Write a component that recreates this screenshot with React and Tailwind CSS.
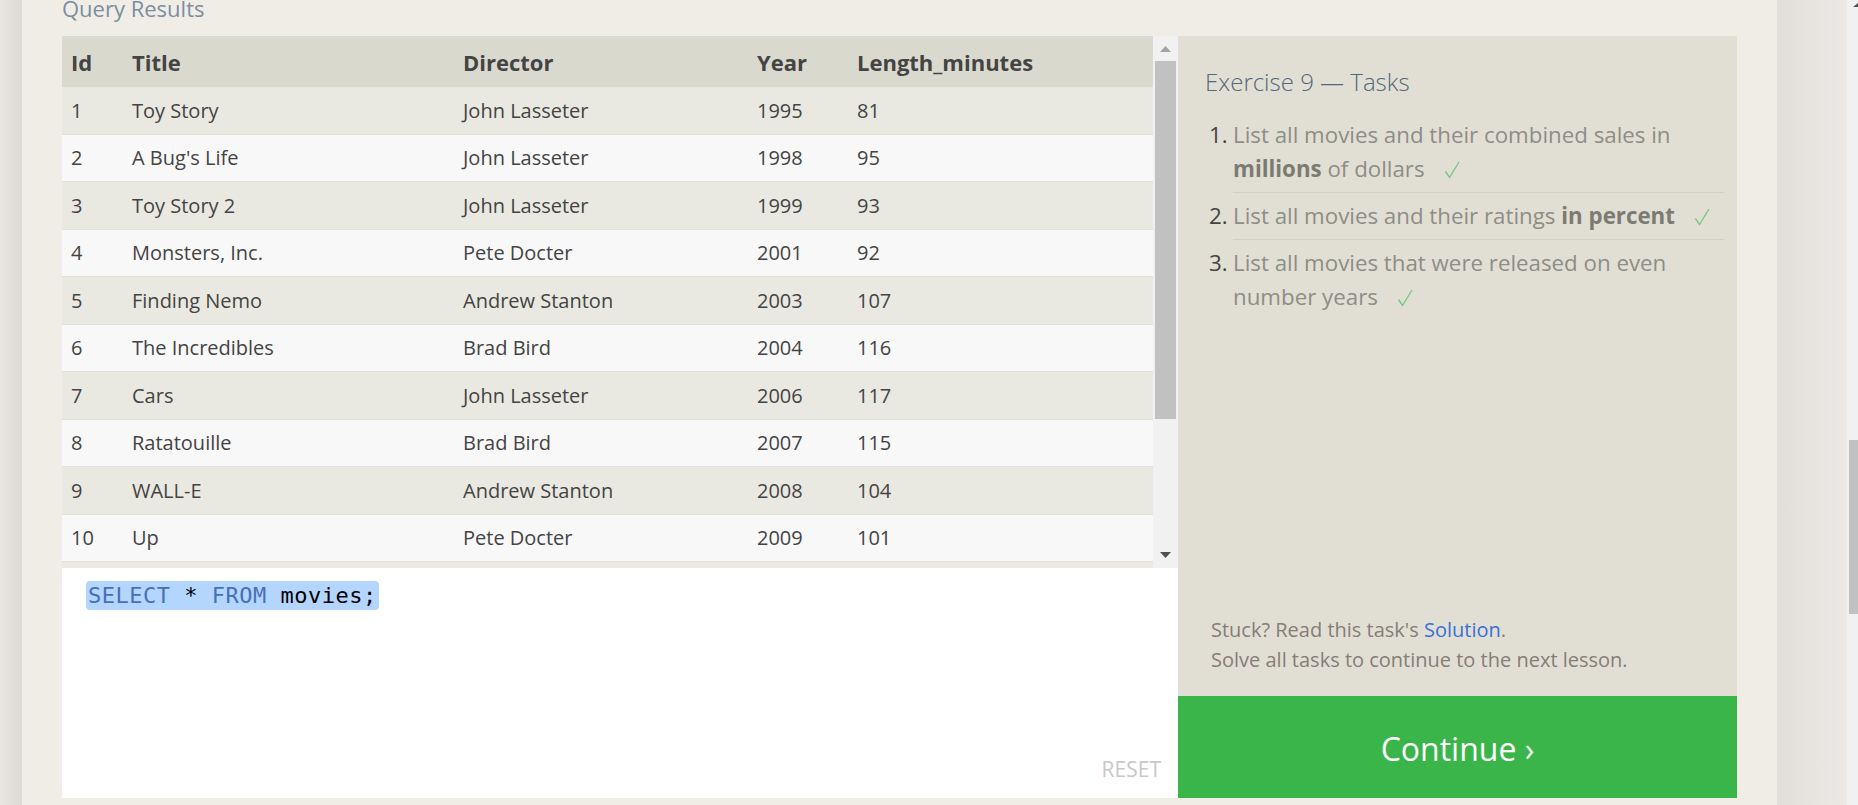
const rows = [
  ["1", "Toy Story", "John Lasseter", "1995", "81"],
  ["2", "A Bug's Life", "John Lasseter", "1998", "95"],
  ["3", "Toy Story 2", "John Lasseter", "1999", "93"],
  ["4", "Monsters, Inc.", "Pete Docter", "2001", "92"],
  ["5", "Finding Nemo", "Andrew Stanton", "2003", "107"],
  ["6", "The Incredibles", "Brad Bird", "2004", "116"],
  ["7", "Cars", "John Lasseter", "2006", "117"],
  ["8", "Ratatouille", "Brad Bird", "2007", "115"],
  ["9", "WALL-E", "Andrew Stanton", "2008", "104"],
  ["10", "Up", "Pete Docter", "2009", "101"],
];

function Check() {
  return (
    <svg width="16" height="18" viewBox="0 0 16 18" className="inline-block ml-[19px] align-[-2px]">
      <path d="M1.5 10.5 L5.5 16.5 L15 1" fill="none" stroke="#7cc688" strokeWidth="1.4" />
    </svg>
  );
}

export default function App() {
  return (
    <div className="flex h-[805px] w-[1858px] overflow-hidden bg-[#f0ede6] font-['Open_Sans',sans-serif]">
      <div className="w-[22px] shrink-0 bg-linear-to-r from-[#e9e5e2] to-[#ddd9d4]" />
      <div className="w-[1755px] shrink-0 flex flex-col pl-[40px]">
        <div className="h-[36px]">
          <p className="text-[22px] leading-[16px] text-[#7d8da0]">Query Results</p>
        </div>
        <div className="flex h-[762px] w-[1675px]">
          <div className="w-[1116px] flex flex-col">
            <div className="flex h-[532px] shrink-0">
              <div className="w-[1091px] bg-[#ebe9e2] flex flex-col">
                <div className="grid grid-cols-[61px_331px_294px_100px_1fr] h-[51px] shrink-0 items-center bg-[#dad9ce] text-[22px] leading-[30px] font-bold text-[#444]">
                  <div className="pl-[9px]">Id</div>
                  <div className="pl-[9px]">Title</div>
                  <div className="pl-[9px]">Director</div>
                  <div className="pl-[9px]">Year</div>
                  <div className="pl-[9px]">Length_minutes</div>
                </div>
                {rows.map((r, i) => (
                  <div
                    key={r[0]}
                    className={
                      "grid grid-cols-[61px_331px_294px_100px_1fr] h-[47.5px] shrink-0 items-center border-b border-[#e0dfda] pt-[1px] text-[20px] leading-[28px] text-[#444] " +
                      (i % 2 === 0 ? "bg-[#eae9e1]" : "bg-[#f8f8f8]")
                    }
                  >
                    {r.map((c, j) => (
                      <div key={j} className="pl-[9px]">{c}</div>
                    ))}
                  </div>
                ))}
              </div>
              <div className="w-[25px] bg-[#f1f1f1] flex flex-col items-center">
                <div className="h-[25px] flex items-center justify-center">
                  <svg width="11" height="6" viewBox="0 0 11 6"><path d="M5.5 0 L11 6 L0 6 Z" fill="#a3a3a3" /></svg>
                </div>
                <div className="w-[21px] h-[358px] bg-[#c1c1c1]" />
                <div className="flex-1" />
                <div className="h-[26px] flex items-center justify-center">
                  <svg width="11" height="6" viewBox="0 0 11 6"><path d="M0 0 L11 0 L5.5 6 Z" fill="#505050" /></svg>
                </div>
              </div>
            </div>
            <div className="flex-1 bg-white flex flex-col justify-between items-start pl-[24px] pr-[17px] pt-[13px] pb-[18px]">
              <div className="bg-[#b4d5fe] rounded-[4px] px-[2px] font-['DejaVu_Sans_Mono',monospace] text-[22px] leading-[29px] tracking-[0.5px] whitespace-pre">
                <span className="text-[#4570b8]">SELECT</span>
                <span className="text-black"> * </span>
                <span className="text-[#4570b8]">FROM</span>
                <span className="text-black"> movies;</span>
              </div>
              <div className="self-end text-[21px] leading-none text-[#c8c8c8]">RESET</div>
            </div>
          </div>
          <div className="w-[559px] flex flex-col bg-[#e1dfd4]">
            <div className="flex-1 flex flex-col pl-[27px] pr-[13px] pt-[30px]">
              <h2 className="text-[24px] leading-[32px] font-light text-[#56677a]">Exercise 9 — Tasks</h2>
              <ol className="mt-[14px] ml-[4px] text-[22.3px] leading-[34px]">
                <li className="flex">
                  <span className="w-[24px] shrink-0 py-[6px] text-[#444]">1.</span>
                  <div className="flex-1 py-[6px] border-b border-[#d2d0c5] text-[#8e8d86]">
                    List all movies and their combined sales in <b className="font-bold text-[#7b7a73]">millions</b> of dollars<Check />
                  </div>
                </li>
                <li className="flex">
                  <span className="w-[24px] shrink-0 py-[6px] text-[#444]">2.</span>
                  <div className="flex-1 py-[6px] border-b border-[#d2d0c5] text-[#8e8d86]">
                    List all movies and their ratings <b className="font-bold text-[#7b7a73]">in percent</b><Check />
                  </div>
                </li>
                <li className="flex">
                  <span className="w-[24px] shrink-0 py-[6px] text-[#444]">3.</span>
                  <div className="flex-1 py-[6px] text-[#8e8d86]">
                    List all movies that were released on even number years<Check />
                  </div>
                </li>
              </ol>
              <div className="flex-1" />
              <div className="pl-[6px] pb-[21px] text-[20px] leading-[30px] text-[#857d76]">
                <p>Stuck? Read this task's <span className="text-[#3a6fd8]">Solution</span>.</p>
                <p>Solve all tasks to continue to the next lesson.</p>
              </div>
            </div>
            <div className="h-[102px] shrink-0 bg-[#3ab54a] flex items-center justify-center pt-[4px] text-white text-[32px]">
              Continue ›
            </div>
          </div>
        </div>
      </div>
      <div className="w-[70px] shrink-0 bg-linear-to-r from-[#e2deda] to-[#ece8e5]" />
      <div className="w-[11px] shrink-0 bg-[#f1f1f1] flex flex-col items-end">
        <svg width="5" height="4" viewBox="0 0 5 4" className="mt-[3px]"><path d="M5 0 L5 4 L0 4 Z" fill="#505050" /></svg>
        <div className="mt-[433px] h-[174px] w-[9px] bg-[#c1c1c1]" />
      </div>
    </div>
  );
}
